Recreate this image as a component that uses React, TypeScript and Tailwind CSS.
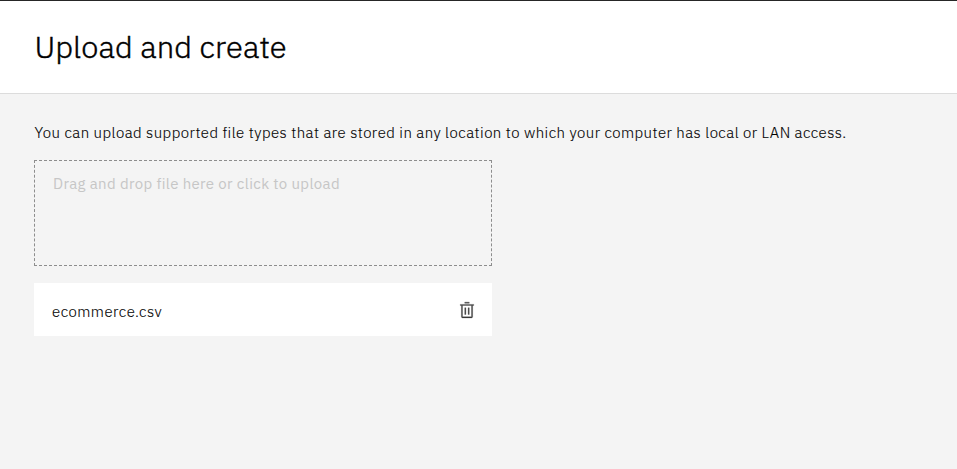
function TrashIcon() {
  return (
    <svg className="h-[18px] w-[18px] fill-[#393939] stroke-[#393939]" strokeWidth="0.5" viewBox="0 0 32 32" aria-hidden="true">
      <path d="M12 12h2v12h-2zM18 12h2v12h-2z" />
      <path d="M4 6v2h2v20a2 2 0 0 0 2 2h16a2 2 0 0 0 2-2V8h2V6H4zm4 22V8h16v20H8zM12 2h8v2h-8z" />
    </svg>
  );
}

export default function App() {
  return (
    <div className="flex h-screen flex-col border-t border-[#262626] bg-[#f4f4f4] font-['IBM_Plex_Sans',Roboto,sans-serif] text-[#161616]">
      <header className="flex h-[93px] shrink-0 items-center border-b border-[#dcdcdc] bg-white px-[34px]">
        <h1 className="pl-[0.4px] text-[31px] leading-10 font-light tracking-[0.08px] whitespace-nowrap text-black [-webkit-text-stroke:0.4px]">Upload and create</h1>
      </header>
      <main className="flex flex-col items-start px-[34px] pt-[29px]">
        <p className="pl-[0.4px] text-[15px] leading-5 font-light tracking-[0.455px] whitespace-nowrap text-black [-webkit-text-stroke:0.12px]">
          You can upload supported file types that are stored in any location to which your computer has local or LAN access.
        </p>
        <div className="mt-[17px] h-[106px] w-[458px] border border-dashed border-[#8d8d8d] px-[18px] pt-[13px] text-[15px] leading-5 tracking-[0.35px] text-[#c6c6c6]">
          <span>Drag and drop file here or click to upload</span>
        </div>
        <div className="mt-[17px] flex h-[53px] w-[458px] items-center justify-between bg-white pr-4 pl-[18px]">
          <span className="pt-1 text-[15px] leading-5 font-light tracking-[0.48px] text-black [-webkit-text-stroke:0.12px]">ecommerce.csv</span>
          <button type="button" aria-label="Remove file">
            <TrashIcon />
          </button>
        </div>
      </main>
    </div>
  );
}
